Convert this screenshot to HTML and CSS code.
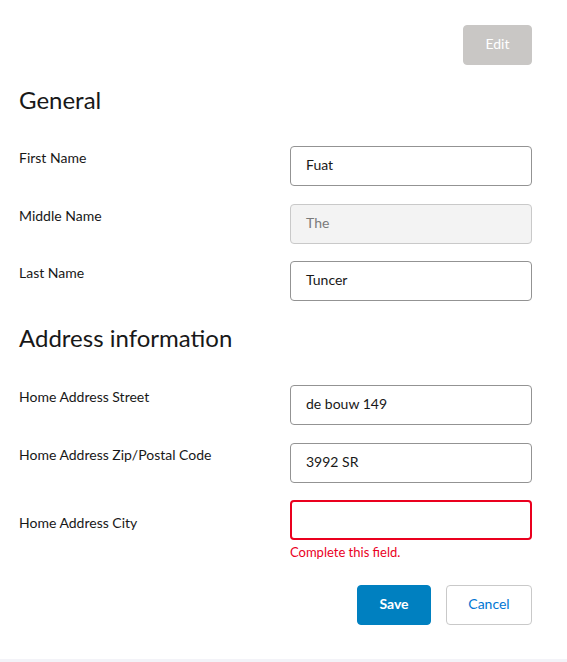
FILE: index.html
```html
<!DOCTYPE html>
<html lang="en">
<head>
<meta charset="utf-8">
<title>Record Edit</title>
<link rel="stylesheet" href="styles.css">
</head>
<body>
<div class="page">
  <div class="toolbar">
    <button class="btn btn-disabled" type="button">Edit</button>
  </div>

  <h2 class="section-title first">General</h2>
  <div class="row">
    <label class="label">First Name</label>
    <div class="field"><div class="input">Fuat</div></div>
  </div>
  <div class="row">
    <label class="label">Middle Name</label>
    <div class="field"><div class="input input-disabled">The</div></div>
  </div>
  <div class="row">
    <label class="label">Last Name</label>
    <div class="field"><div class="input">Tuncer</div></div>
  </div>

  <h2 class="section-title second">Address information</h2>
  <div class="row">
    <label class="label">Home Address Street</label>
    <div class="field"><div class="input">de bouw 149</div></div>
  </div>
  <div class="row">
    <label class="label">Home Address Zip/Postal Code</label>
    <div class="field"><div class="input">3992 SR</div></div>
  </div>
  <div class="row row-error">
    <label class="label label-mid">Home Address City</label>
    <div class="field">
      <div class="input input-error"></div>
      <div class="error-text">Complete this field.</div>
    </div>
  </div>

  <div class="actions">
    <button class="btn btn-brand" type="button">Save</button>
    <button class="btn btn-neutral" type="button">Cancel</button>
  </div>
</div>
<div class="footer-strip"></div>
</body>
</html>
```

FILE: styles.css
```css
html, body {
  margin: 0;
  padding: 0;
  background: #ffffff;
}
body {
  font-family: Lato, "Noto Sans", sans-serif;
  color: #181818;
  font-size: 14px;
  height: 662px;
  display: flex;
  flex-direction: column;
}
.page {
  flex: 1;
  padding: 25px 35px 0 19px;
}
.toolbar {
  display: flex;
  justify-content: flex-end;
}
.btn {
  font-family: inherit;
  font-size: 14px;
  height: 40px;
  border-radius: 4px;
  border: 1px solid transparent;
  padding: 0 16px 4px;
  cursor: pointer;
}
.btn-disabled {
  width: 69px;
  background: #c9c7c5;
  border-color: #c9c7c5;
  color: #ffffff;
}
.section-title {
  font-weight: 400;
  font-size: 24px;
  line-height: 28px;
  margin: 0;
  color: #181818;
}
.section-title.first {
  margin-top: 21px;
  margin-bottom: 32px;
}
.section-title.second {
  margin-top: 23px;
  margin-bottom: 33px;
}
.row {
  display: grid;
  grid-template-columns: 271px 242px;
  margin-bottom: 17.5px;
}
.label {
  padding-top: 2px;
  line-height: 20px;
  color: #181818;
}
.label-mid {
  padding-top: 13px;
}
.input {
  box-sizing: border-box;
  height: 40px;
  border: 1px solid #939393;
  border-radius: 4px;
  padding: 0 15px 3px;
  display: flex;
  align-items: center;
  color: #181818;
  background: #ffffff;
}
.input-disabled {
  background: #f3f3f3;
  border-color: #c9c9c9;
  color: #7a7a7a;
}
.input-error {
  border: 2px solid #ea001e;
}
.error-text {
  color: #ea001e;
  font-size: 13px;
  line-height: 18px;
  margin-top: 3px;
}
.row-error {
  margin-bottom: 24px;
}
.actions {
  display: flex;
  justify-content: flex-end;
  gap: 15px;
}
.btn-brand {
  width: 74px;
  background: #0080c0;
  border-color: #0080c0;
  color: #ffffff;
  font-weight: 700;
}
.btn-neutral {
  width: 86px;
  background: #ffffff;
  border-color: #c9c9c9;
  color: #0176d3;
}
.footer-strip {
  height: 3px;
  background: #f3f3f8;
}
```
